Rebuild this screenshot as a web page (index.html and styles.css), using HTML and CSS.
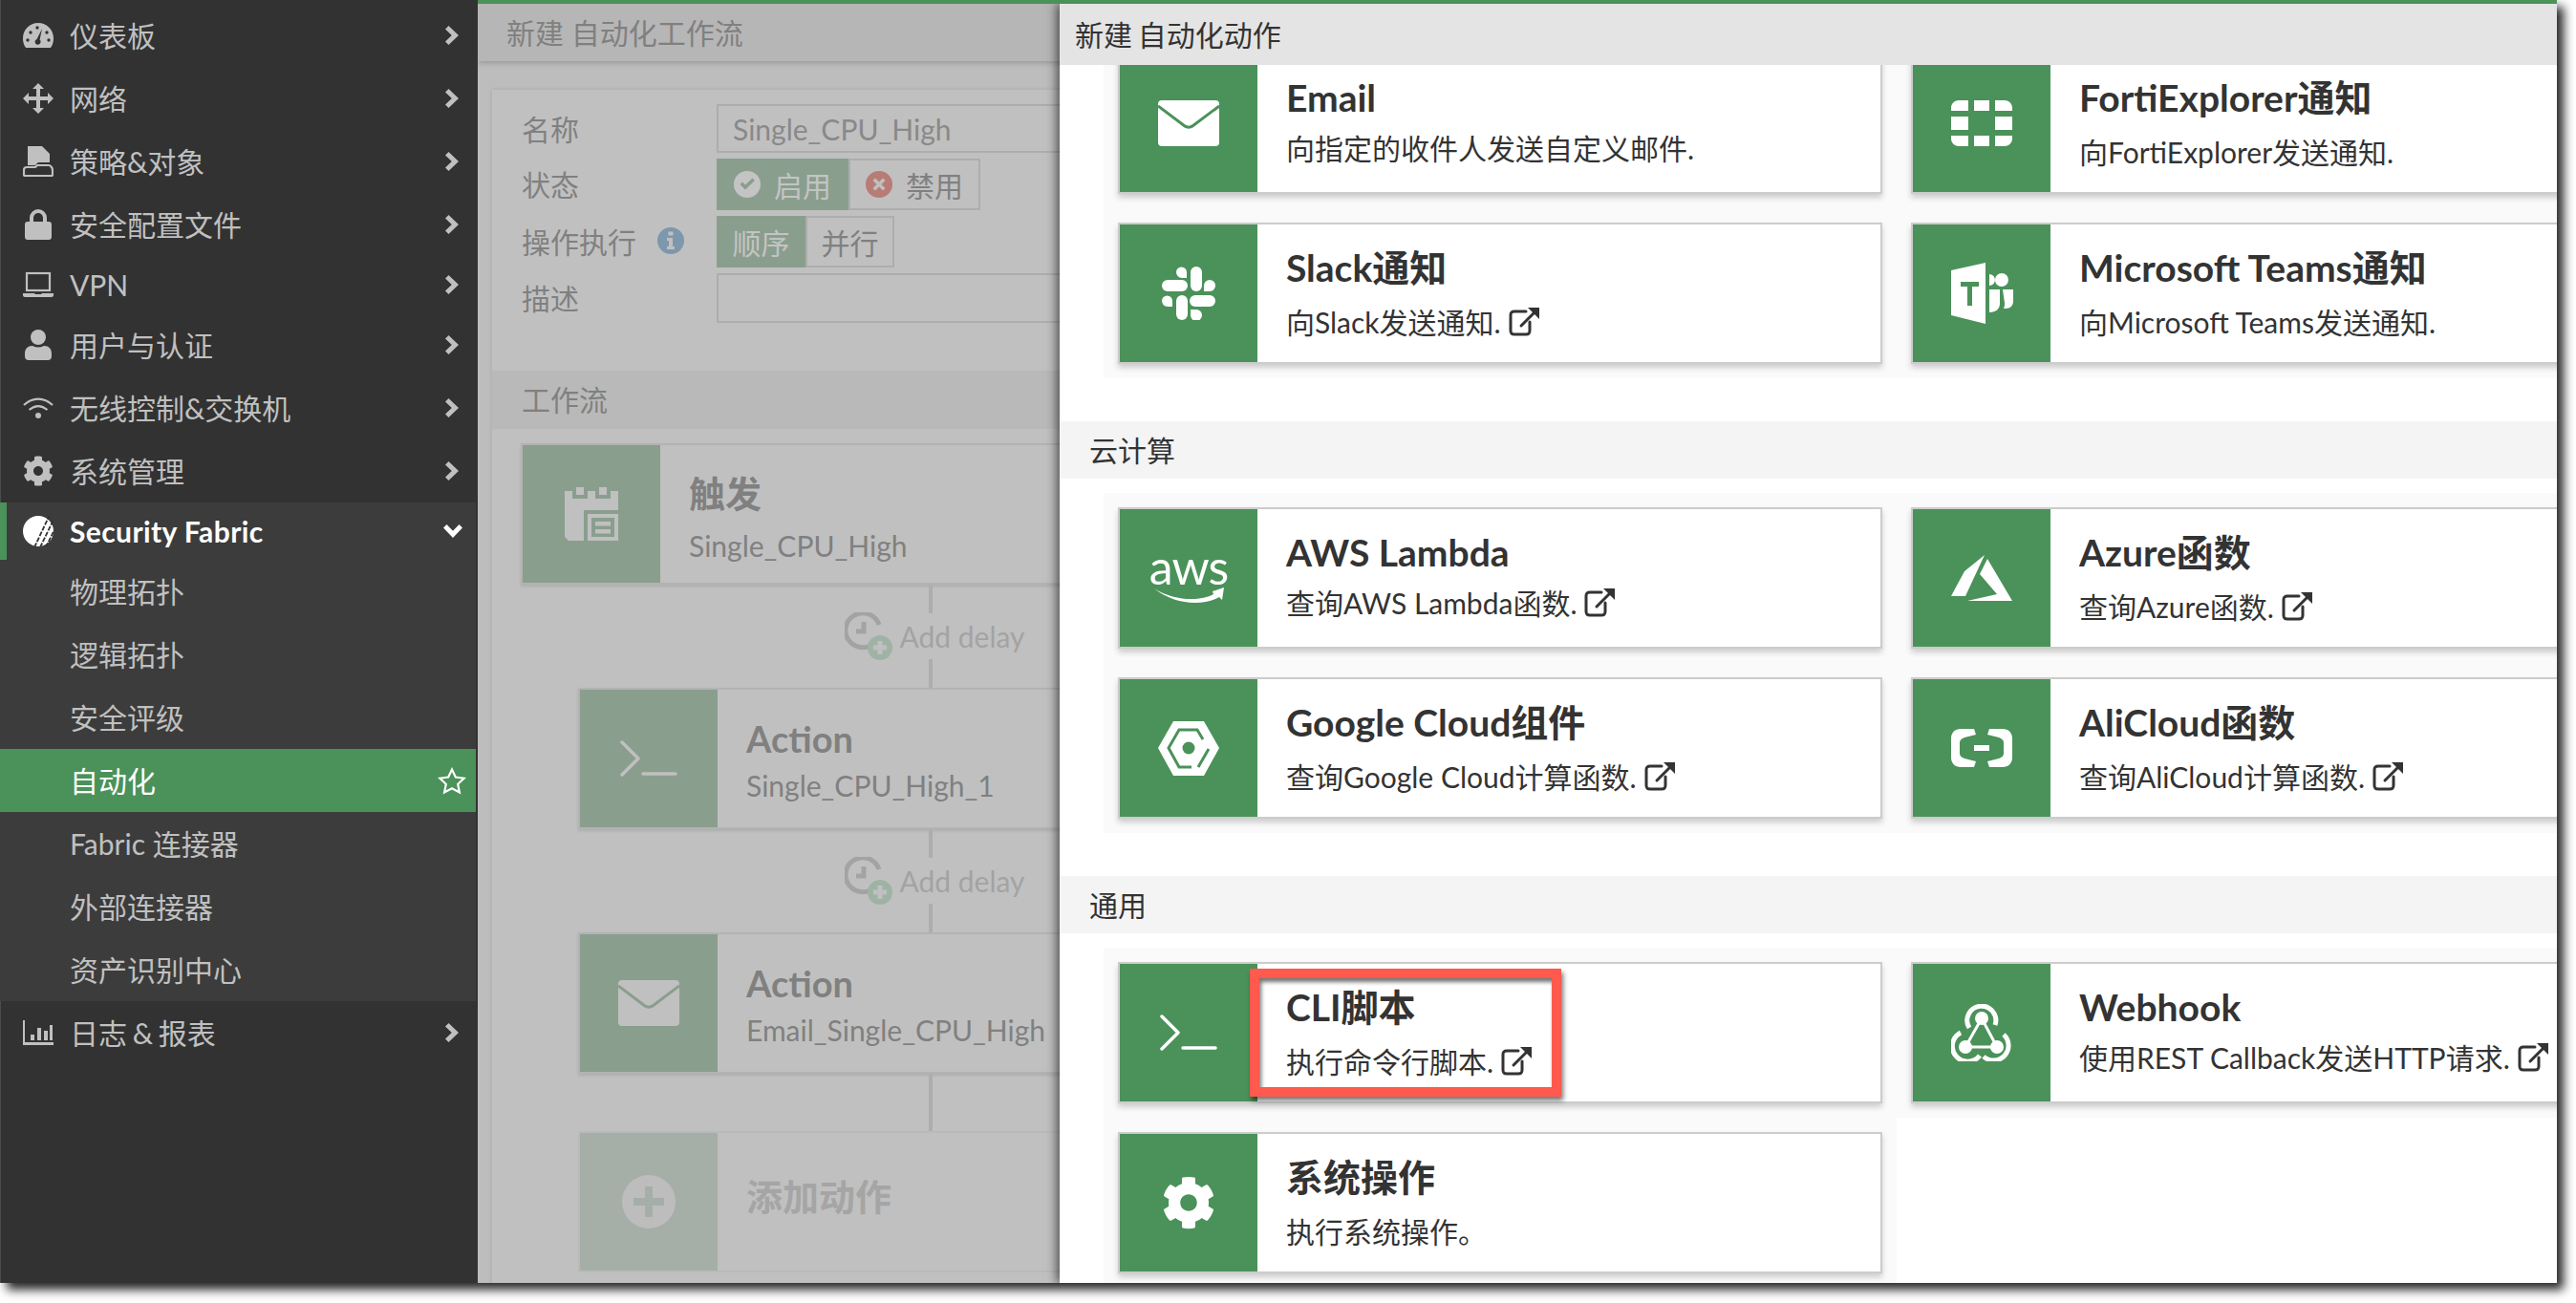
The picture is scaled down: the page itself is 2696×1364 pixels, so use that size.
FILE: index.html
```html
<!DOCTYPE html>
<html lang="zh-CN">
<head>
    <meta charset="UTF-8">
    <title>新建 自动化动作</title>
    <link rel="stylesheet" href="styles.css">
</head>
<body>
    <svg class="sprite" xmlns="http://www.w3.org/2000/svg">
        <symbol id="i-gauge" viewBox="0 0 32 26">
            <path d="M16 0C7 0 0 7 0 16c0 3 .6 6 2 8.5.4.9 1 1.5 2 1.5h24c1 0 1.6-.6 2-1.5 1.4-2.5 2-5.5 2-8.5C32 7 25 0 16 0z"/>
            <g class="cut"><circle cx="5" cy="18" r="1.7"/><circle cx="8" cy="10" r="1.7"/><circle cx="15" cy="5" r="1.7"/><circle cx="27" cy="18" r="1.7"/><circle cx="25" cy="10" r="1.7"/><path d="M20 6l-2.400 11.500a3 3 0 1 1-3-.6z"/></g>
        </symbol>
        <symbol id="i-move" viewBox="0 0 32 32">
            <path d="M16 0l6 6h-4v8h8v-4l6 6-6 6v-4h-8v8h4l-6 6-6-6h4v-8H6v4l-6-6 6-6v4h8V6h-4z"/>
        </symbol>
        <symbol id="i-policy" viewBox="0 0 32 32">
            <path d="M5 0h15l8 8v9H17c-2 0-3 2-4 3H5z"/>
            <path class="line" d="M1 30v-5c0-2 1-3 3-3h9l2-2h12c2 0 4 3 4 5v5c0 1-.5 1-1 1H2c-.5 0-1 0-1-1z"/>
        </symbol>
        <symbol id="i-lock" viewBox="0 0 28 32">
            <path d="M5 13V9a9 9 0 0 1 18 0v4h2c2 0 3 1 3 3v13c0 2-1 3-3 3H3c-2 0-3-1-3-3V16c0-2 1-3 3-3zm4 0h10V9a5 5 0 0 0-10 0z"/>
        </symbol>
        <symbol id="i-laptop" viewBox="0 0 32 26">
            <rect class="line" x="4" y="1" width="24" height="18"/>
            <path d="M0 22h12l1 1h6l1-1h12v2c0 1-1 2-2 2H2c-1 0-2-1-2-2z"/>
        </symbol>
        <symbol id="i-user" viewBox="0 0 28 32">
            <circle cx="14" cy="8" r="8"/>
            <path d="M8 17c4 2 8 2 12 0 5 0 8 3 8 8v3c0 2-1 4-4 4H4c-3 0-4-2-4-4v-3c0-5 3-8 8-8z"/>
        </symbol>
        <symbol id="i-wifi" viewBox="0 0 32 22">
            <path class="line" d="M1 8c9-8.500 21-8.500 30 0M6.500 13c6-5 13-5 19 0"/>
            <circle cx="16" cy="19" r="3"/>
        </symbol>
        <symbol id="i-cog" viewBox="0 0 512 512">
            <path d="M487.4 315.7l-42.6-24.6c4.3-23.2 4.3-47 0-70.2l42.6-24.6c4.900-2.800 7.100-8.600 5.500-14-11.100-35.600-30-67.800-54.700-94.600-3.800-4.100-10-5.100-14.800-2.300L380.800 110c-17.900-15.400-38.500-27.300-60.800-35.100V25.800c0-5.600-3.900-10.500-9.400-11.700-36.700-8.200-74.300-7.800-109.200 0-5.500 1.200-9.400 6.100-9.400 11.700V75c-22.200 7.900-42.800 19.800-60.800 35.100L88.700 85.500c-4.900-2.800-11-1.900-14.800 2.300-24.700 26.700-43.600 58.900-54.700 94.600-1.700 5.400.6 11.200 5.500 14L67.300 221c-4.300 23.200-4.300 47 0 70.200l-42.600 24.600c-4.900 2.800-7.100 8.600-5.500 14 11.100 35.600 30 67.800 54.700 94.600 3.800 4.100 10 5.100 14.800 2.300l42.600-24.600c17.900 15.400 38.500 27.300 60.800 35.100v49.200c0 5.600 3.900 10.500 9.400 11.700 36.700 8.200 74.300 7.800 109.200 0 5.500-1.200 9.400-6.100 9.400-11.700v-49.200c22.200-7.900 42.800-19.800 60.800-35.100l42.600 24.600c4.900 2.800 11 1.900 14.800-2.300 24.700-26.700 43.600-58.900 54.700-94.600 1.500-5.500-.7-11.300-5.600-14.100zM256 336c-44.100 0-80-35.900-80-80s35.900-80 80-80 80 35.900 80 80-35.900 80-80 80z"/>
        </symbol>
        <symbol id="i-fabric" viewBox="0 0 32 32">
            <circle cx="16" cy="16" r="16"/>
            <path class="slash" d="M12 33L28-1M18 33L33 2M24 33L36 8"/>
        </symbol>
        <symbol id="i-chart" viewBox="0 0 32 26">
            <path d="M0 0h2v23h30v3H0zM8 15h4v6H8zM15 8h4v13h-4zM22 11h4v10h-4zM28 5h3v16h-3z"/>
        </symbol>
        <symbol id="i-chev" viewBox="0 0 14 20">
            <path d="M3.500 0L14 10 3.500 20 0 16.500 6.800 10 0 3.500z"/>
        </symbol>
        <symbol id="i-chevd" viewBox="0 0 20 14">
            <path d="M0 3.500L3.500 0 10 6.800 16.500 0 20 3.500 10 14z"/>
        </symbol>
        <symbol id="i-star" viewBox="0 0 30 29">
            <path class="line" d="M15 2.500l3.800 8 8.900 1.200-6.500 6.100 1.700 8.700L15 22.200l-7.900 4.300 1.700-8.700-6.500-6.100 8.900-1.200z"/>
        </symbol>
        <symbol id="i-check" viewBox="0 0 28 28">
            <path fill-rule="evenodd" d="M14 0a14 14 0 1 1 0 28a14 14 0 0 1 0-28zM6.500 14l5.500 5.500L22 10l-2.500-2.500-7.500 7-3-3z"/>
        </symbol>
        <symbol id="i-cross" viewBox="0 0 28 28">
            <path fill-rule="evenodd" d="M14 0a14 14 0 1 1 0 28a14 14 0 0 1 0-28zM10 7.500L7.500 10l4 4-4 4 2.500 2.500 4-4 4 4 2.500-2.500-4-4 4-4L18 7.500l-4 4z"/>
        </symbol>
        <symbol id="i-info" viewBox="0 0 28 28">
            <path fill-rule="evenodd" d="M14 0a14 14 0 1 1 0 28a14 14 0 0 1 0-28zM11.500 4.500v4h5v-4zM10 11v3h2v6h-2v3h8v-3h-2v-9z"/>
        </symbol>
        <symbol id="i-calendar" viewBox="0 0 56 56">
            <path d="M12 0h8v8h-8zM36 0h8v8h-8zM0 4h8v8h16V4h8v8h16V4h8v20H20v32H4l-4-4z"/>
            <path fill-rule="evenodd" d="M24 28h32v28H24zM28 32v20h24V32z"/>
            <path d="M32 36h16v4.500H32zM32 44h16v4.500H32z"/>
        </symbol>
        <symbol id="i-cli" viewBox="0 0 60 38">
            <path class="line-thick" d="M2 2l17 17L2 36M24 35h34"/>
        </symbol>
        <symbol id="i-mail" viewBox="0 0 64 48">
            <rect width="64" height="48" rx="4"/>
            <path class="line-cut" d="M0 6l28 21c2 1.500 6 1.500 8 0L64 6"/>
        </symbol>
        <symbol id="i-plus" viewBox="0 0 56 56">
            <path fill-rule="evenodd" d="M28 0a28 28 0 1 1 0 56a28 28 0 0 1 0-56zM24 12v12H12v8h12v12h8V32h12v-8H32V12z"/>
        </symbol>
        <symbol id="i-delay" viewBox="0 0 50 50">
            <path class="clock" d="M33 30A18 18 0 1 1 36 13M20 10v10h-8"/>
            <circle class="clock-badge" cx="37" cy="37" r="13"/>
            <path class="clock-plus" d="M37 30v14M30 37h14"/>
        </symbol>
        <symbol id="i-slack" viewBox="0 0 56 56">
            <rect x="30" width="12" height="26" rx="6"/><path d="M15 6a5.500 5.500 0 0 1 11 0v6H21a6 6 0 0 1-6-6z"/>
            <rect y="14" width="27" height="12" rx="6"/><path d="M44 20a6 6 0 0 1 12 0 6 6 0 0 1-6 6h-6z"/>
            <rect x="29" y="30" width="27" height="12" rx="6"/><path d="M0 36a5.500 5.500 0 0 1 11 0v6H6a6 6 0 0 1-6-6z"/>
            <rect x="15" y="30" width="12" height="26" rx="6"/><path d="M30 45h6a6 6 0 1 1-6 6z"/>
        </symbol>
        <symbol id="i-forti" viewBox="0 0 64 48">
            <path d="M18 0v11H0V8c0-4 3-8 8-8zM24 0h16v11H24zM46 0h10c5 0 8 4 8 8v3H46zM0 17h18v14H0zM46 17h18v14H46zM0 37h18v11H8c-5 0-8-4-8-8zM24 37h16v11H24zM46 37h18v3c0 4-3 8-8 8H46z"/>
        </symbol>
        <symbol id="i-teams" viewBox="0 0 65 64">
            <path fill-rule="evenodd" d="M0 8L36 0v64L0 55zM10 20v5h7v20h5V25h7v-5z"/>
            <path d="M40 19v3a9 9 0 0 1 0 0zM40 12a6 6 0 1 1 0 12zM53 11a7 7 0 1 1-.1 14 7 7 0 0 1 .1-14zM40 28h11v15c0 5-4 9-11 9zM54 28h11v12c0 5-3 8-8 8h-2c1-2 1-4 1-6z"/>
        </symbol>
        <symbol id="i-azure" viewBox="0 0 64 48">
            <path d="M35 0L14 17 0 43h15zM38 4L64 48H17l31-7-18-21z"/>
        </symbol>
        <symbol id="i-ali" viewBox="0 0 64 40">
            <path d="M24 0H10C4 0 0 4 0 10v20c0 6 4 10 10 10h14l2-6-12-3c-3-1-5-3-5-5V14c0-2 2-4 5-5l12-3zM40 0h14c6 0 10 4 10 10v20c0 6-4 10-10 10H40l-2-6 12-3c3-1 5-3 5-5V14c0-2-2-4-5-5L38 6zM24 17h16v6H24z"/>
        </symbol>
        <symbol id="i-google" viewBox="0 0 64 57">
            <path d="M16 0h32l16 28-16 29H16L0 28z"/>
            <path class="line-cut" d="M47 19L41 9H22L11 28l11 20h13M53 29L42 48"/>
            <circle class="fill-cut" cx="32" cy="28" r="6.500"/>
        </symbol>
        <symbol id="i-hook" viewBox="0 0 64 60">
            <path class="line-hook" d="M19 25A15 15 0 1 1 46 22M10 30A16 16 0 1 0 30 54M34 55A15.500 15.500 0 1 0 55 32"/>
            <path class="line-thin" d="M32 15L15 45h33z"/>
            <circle cx="32" cy="15" r="7"/><circle cx="15" cy="45" r="7"/><circle cx="48" cy="45" r="7"/>
        </symbol>
        <symbol id="i-ext" viewBox="0 0 32 30">
            <path class="line-ext" d="M18 4H6C3 4 2 5 2 8v16c0 3 1 4 4 4h12c3 0 4-1 4-4V15"/>
            <path class="line-ext" d="M13 19L28 4"/>
            <path d="M20 0h12v12z"/>
        </symbol>
    </svg>

    <div class="window">
        <nav class="sidebar">
            <a class="nav-row"><svg class="nav-icon"><use href="#i-gauge"/></svg><span class="nav-label">仪表板</span><svg class="chev"><use href="#i-chev"/></svg></a>
            <a class="nav-row"><svg class="nav-icon"><use href="#i-move"/></svg><span class="nav-label">网络</span><svg class="chev"><use href="#i-chev"/></svg></a>
            <a class="nav-row"><svg class="nav-icon"><use href="#i-policy"/></svg><span class="nav-label">策略&amp;对象</span><svg class="chev"><use href="#i-chev"/></svg></a>
            <a class="nav-row"><svg class="nav-icon"><use href="#i-lock"/></svg><span class="nav-label">安全配置文件</span><svg class="chev"><use href="#i-chev"/></svg></a>
            <a class="nav-row nav-latin"><svg class="nav-icon"><use href="#i-laptop"/></svg><span class="nav-label">VPN</span><svg class="chev"><use href="#i-chev"/></svg></a>
            <a class="nav-row"><svg class="nav-icon"><use href="#i-user"/></svg><span class="nav-label">用户与认证</span><svg class="chev"><use href="#i-chev"/></svg></a>
            <a class="nav-row"><svg class="nav-icon"><use href="#i-wifi"/></svg><span class="nav-label">无线控制&amp;交换机</span><svg class="chev"><use href="#i-chev"/></svg></a>
            <a class="nav-row"><svg class="nav-icon"><use href="#i-cog"/></svg><span class="nav-label">系统管理</span><svg class="chev"><use href="#i-chev"/></svg></a>
            <div class="nav-group">
                <a class="nav-row nav-open"><svg class="nav-icon"><use href="#i-fabric"/></svg><span class="nav-label">Security Fabric</span><svg class="chevd"><use href="#i-chevd"/></svg></a>
                <a class="nav-sub">物理拓扑</a>
                <a class="nav-sub">逻辑拓扑</a>
                <a class="nav-sub">安全评级</a>
                <a class="nav-sub nav-active">自动化<svg class="star"><use href="#i-star"/></svg></a>
                <a class="nav-sub">Fabric 连接器</a>
                <a class="nav-sub">外部连接器</a>
                <a class="nav-sub">资产识别中心</a>
            </div>
            <a class="nav-row nav-last"><svg class="nav-icon"><use href="#i-chart"/></svg><span class="nav-label">日志 &amp; 报表</span><svg class="chev"><use href="#i-chev"/></svg></a>
        </nav>

        <main class="main">
            <div class="main-head">新建 自动化工作流</div>
            <section class="form-card">
                <div class="form">
                    <div class="form-row">
                        <label class="form-label">名称</label>
                        <div class="input">Single_CPU_High</div>
                    </div>
                    <div class="form-row">
                        <label class="form-label">状态</label>
                        <div class="toggle">
                            <span class="toggle-on toggle-wide"><svg class="toggle-icon"><use href="#i-check"/></svg>启用</span>
                            <span class="toggle-off toggle-wide"><svg class="toggle-icon icon-red"><use href="#i-cross"/></svg>禁用</span>
                        </div>
                    </div>
                    <div class="form-row">
                        <label class="form-label">操作执行<svg class="info-icon"><use href="#i-info"/></svg></label>
                        <div class="toggle">
                            <span class="toggle-on">顺序</span>
                            <span class="toggle-off">并行</span>
                        </div>
                    </div>
                    <div class="form-row">
                        <label class="form-label">描述</label>
                        <div class="input input-short"></div>
                    </div>
                </div>

                <div class="flow-head">工作流</div>
                <div class="flow">
                    <div class="flow-card flow-trigger">
                        <div class="flow-icon"><svg class="ic-calendar"><use href="#i-calendar"/></svg></div>
                        <div class="flow-text">
                            <div class="flow-title">触发</div>
                            <div class="flow-desc">Single_CPU_High</div>
                        </div>
                    </div>
                    <div class="flow-line"></div>
                    <div class="add-delay"><svg class="delay-icon"><use href="#i-delay"/></svg>Add delay</div>
                    <div class="flow-line"></div>
                    <div class="flow-card">
                        <div class="flow-icon"><svg class="ic-cli"><use href="#i-cli"/></svg></div>
                        <div class="flow-text">
                            <div class="flow-title">Action</div>
                            <div class="flow-desc">Single_CPU_High_1</div>
                        </div>
                    </div>
                    <div class="flow-line"></div>
                    <div class="add-delay"><svg class="delay-icon"><use href="#i-delay"/></svg>Add delay</div>
                    <div class="flow-line"></div>
                    <div class="flow-card">
                        <div class="flow-icon"><svg class="ic-mail"><use href="#i-mail"/></svg></div>
                        <div class="flow-text">
                            <div class="flow-title">Action</div>
                            <div class="flow-desc">Email_Single_CPU_High</div>
                        </div>
                    </div>
                    <div class="flow-line flow-line-long"></div>
                    <div class="flow-card flow-add">
                        <div class="flow-icon"><svg class="ic-plus"><use href="#i-plus"/></svg></div>
                        <div class="flow-text"><div class="flow-title">添加动作</div></div>
                    </div>
                </div>
            </section>

            <aside class="panel">
                <div class="panel-head">新建 自动化动作</div>
                <div class="panel-body">
                    <div class="tiles tiles-first">
                        <div class="tile">
                            <div class="card">
                                <div class="card-icon"><svg class="ic-mail"><use href="#i-mail"/></svg></div>
                                <div class="card-text">
                                    <div class="card-title">Email</div>
                                    <div class="card-desc tight">向指定的收件人发送自定义邮件.</div>
                                </div>
                            </div>
                        </div>
                        <div class="tile">
                            <div class="card">
                                <div class="card-icon"><svg class="ic-forti"><use href="#i-forti"/></svg></div>
                                <div class="card-text">
                                    <div class="card-title">FortiExplorer通知</div>
                                    <div class="card-desc">向FortiExplorer发送通知.</div>
                                </div>
                            </div>
                        </div>
                        <div class="tile">
                            <div class="card">
                                <div class="card-icon"><svg class="ic-slack"><use href="#i-slack"/></svg></div>
                                <div class="card-text">
                                    <div class="card-title">Slack通知</div>
                                    <div class="card-desc">向Slack发送通知.<svg class="ext"><use href="#i-ext"/></svg></div>
                                </div>
                            </div>
                        </div>
                        <div class="tile">
                            <div class="card">
                                <div class="card-icon"><svg class="ic-teams"><use href="#i-teams"/></svg></div>
                                <div class="card-text">
                                    <div class="card-title">Microsoft Teams通知</div>
                                    <div class="card-desc">向Microsoft Teams发送通知.</div>
                                </div>
                            </div>
                        </div>
                    </div>

                    <div class="section-head">云计算</div>
                    <div class="tiles">
                        <div class="tile">
                            <div class="card">
                                <div class="card-icon"><span class="aws"><span class="aws-word">aws</span><svg class="aws-smile" viewBox="0 0 74 18"><path d="M1 2c20 13 48 14 62 6l-1-3 12-4-2 13-3-3c-16 9-46 9-68-9z"/></svg></span></div>
                                <div class="card-text">
                                    <div class="card-title">AWS Lambda</div>
                                    <div class="card-desc tight">查询AWS Lambda函数.<svg class="ext"><use href="#i-ext"/></svg></div>
                                </div>
                            </div>
                        </div>
                        <div class="tile">
                            <div class="card">
                                <div class="card-icon"><svg class="ic-azure"><use href="#i-azure"/></svg></div>
                                <div class="card-text">
                                    <div class="card-title">Azure函数</div>
                                    <div class="card-desc">查询Azure函数.<svg class="ext"><use href="#i-ext"/></svg></div>
                                </div>
                            </div>
                        </div>
                        <div class="tile">
                            <div class="card">
                                <div class="card-icon"><svg class="ic-google"><use href="#i-google"/></svg></div>
                                <div class="card-text">
                                    <div class="card-title">Google Cloud组件</div>
                                    <div class="card-desc">查询Google Cloud计算函数.<svg class="ext"><use href="#i-ext"/></svg></div>
                                </div>
                            </div>
                        </div>
                        <div class="tile">
                            <div class="card">
                                <div class="card-icon"><svg class="ic-ali"><use href="#i-ali"/></svg></div>
                                <div class="card-text">
                                    <div class="card-title">AliCloud函数</div>
                                    <div class="card-desc">查询AliCloud计算函数.<svg class="ext"><use href="#i-ext"/></svg></div>
                                </div>
                            </div>
                        </div>
                    </div>

                    <div class="section-head">通用</div>
                    <div class="tiles">
                        <div class="tile">
                            <div class="card">
                                <div class="card-icon"><svg class="ic-cli"><use href="#i-cli"/></svg></div>
                                <div class="card-text">
                                    <div class="card-title">CLI脚本</div>
                                    <div class="card-desc">执行命令行脚本.<svg class="ext"><use href="#i-ext"/></svg></div>
                                </div>
                                <div class="highlight"></div>
                            </div>
                        </div>
                        <div class="tile">
                            <div class="card">
                                <div class="card-icon"><svg class="ic-hook"><use href="#i-hook"/></svg></div>
                                <div class="card-text">
                                    <div class="card-title">Webhook</div>
                                    <div class="card-desc tight">使用REST Callback发送HTTP请求.<svg class="ext"><use href="#i-ext"/></svg></div>
                                </div>
                            </div>
                        </div>
                        <div class="tile">
                            <div class="card">
                                <div class="card-icon"><svg class="ic-cog"><use href="#i-cog"/></svg></div>
                                <div class="card-text">
                                    <div class="card-title">系统操作</div>
                                    <div class="card-desc">执行系统操作。</div>
                                </div>
                            </div>
                        </div>
                    </div>
                </div>
            </aside>
        </main>
    </div>
</body>
</html>
```

FILE: styles.css
```css
* {
    box-sizing: border-box;
}

html, body {
    margin: 0;
    height: 100%;
    background-color: #fff;
    overflow: hidden;
}

body {
    font-family: Lato, "Noto Sans CJK SC", sans-serif;
    font-size: 30px;
    color: #333;
}

.sprite {
    position: absolute;
    width: 0;
    height: 0;
}

/* svg sprite helpers */
.cut { fill: #323232; }
.line { fill: none; stroke: currentColor; stroke-width: 2.2; }
.slash { fill: none; stroke: #323232; stroke-width: 1.8; stroke-dasharray: 5 1.5; }
.line-thick { fill: none; stroke: currentColor; stroke-width: 3.500; stroke-linecap: round; stroke-linejoin: round; }
.line-cut { fill: none; stroke: var(--cut, #4a9259); stroke-width: 3; }
.fill-cut { fill: var(--cut, #4a9259); }
.line-hook { fill: none; stroke: currentColor; stroke-width: 5; }
.line-thin { fill: none; stroke: currentColor; stroke-width: 3; }
.line-ext { fill: none; stroke: currentColor; stroke-width: 3; stroke-linecap: round; }
.clock { fill: none; stroke: #a3a3a3; stroke-width: 5; }
.clock-badge { fill: #9fb3a5; }
.clock-plus { fill: none; stroke: #c0c0c0; stroke-width: 5; }

.window {
    display: flex;
    width: 2676px;
    height: 1343px;
    box-shadow: 7px 7px 10px rgba(0, 0, 0, 0.85);
}

/* sidebar */
.sidebar {
    flex: 0 0 500px;
    background-color: #323232;
    border-left: 1px solid #4c4c4c;
    padding-top: 4px;
    color: #c0c0c0;
}

.nav-row {
    display: flex;
    align-items: center;
    height: 66px;
    padding: 0 20px 0 23px;
}

.nav-latin {
    height: 60px;
}

.nav-icon {
    flex: 0 0 32px;
    height: 32px;
    fill: currentColor;
    margin-right: 17px;
}

.nav-label {
    flex: 1;
    margin-top: -2px;
    white-space: nowrap;
}

.nav-latin .nav-label {
    margin-top: 0;
}

.chev {
    width: 14px;
    height: 20px;
    fill: currentColor;
}

.nav-group {
    background-color: #3c3c3c;
    margin-right: 2px;
    margin-left: -1px;
}

.nav-open {
    height: 60px;
    border-left: 7px solid #4a9259;
    padding-left: 17px;
    padding-right: 14px;
    color: #fff;
    font-weight: 700;
}

.nav-open .nav-label {
    margin-top: 0;
    letter-spacing: 0.4px;
}

.chevd {
    width: 20px;
    height: 14px;
    fill: currentColor;
}

.nav-sub {
    display: flex;
    align-items: center;
    justify-content: space-between;
    height: 66px;
    padding: 0 10px 3px 73px;
}

.nav-active {
    background-color: #4a9259;
    color: #fff;
}

.star {
    width: 30px;
    height: 29px;
    margin-top: 3px;
    color: #fff;
}

.nav-last .nav-label {
    word-spacing: -2px;
}

/* dimmed page behind the panel */
.main {
    position: relative;
    flex: 1;
    min-width: 0;
    border-top: 4px solid #4a9259;
    background-color: #bdbdbd;
    color: #808080;
    overflow: hidden;
}

.main-head {
    height: 60px;
    line-height: 60px;
    padding-left: 30px;
    background-color: #b6b6b6;
    box-shadow: 0 2px 6px rgba(0, 0, 0, 0.2);
}

.form-card {
    margin: 30px 0 0 15px;
    width: 1200px;
    height: 1300px;
    background-color: #c0c0c0;
    box-shadow: 0 0 4px rgba(0, 0, 0, 0.12);
}

.form {
    display: flex;
    flex-direction: column;
    gap: 6px;
    padding: 15px 0 0 31px;
}

.form-row {
    display: flex;
    align-items: center;
}

.form-label {
    display: flex;
    align-items: center;
    flex: 0 0 204px;
    margin-top: -2px;
}

.info-icon {
    width: 28px;
    height: 28px;
    margin-left: 22px;
    fill: #7d97ad;
}

.input {
    flex: 1;
    height: 51px;
    line-height: 49px;
    padding-left: 15px;
    border: 2px solid #adadad;
    color: #898989;
}

.input-short {
    height: 52px;
}

.toggle {
    display: flex;
    height: 54px;
}

.toggle-on, .toggle-off {
    display: flex;
    align-items: center;
    justify-content: center;
    gap: 14px;
    width: 93px;
}

.toggle-wide {
    width: 138px;
}

.toggle-on {
    background-color: #8a9e8e;
    color: #c4c4c4;
}

.toggle-off {
    border: 2px solid #adadad;
}

.toggle-icon {
    width: 28px;
    height: 28px;
    fill: #c4c4c4;
}

.icon-red {
    fill: #b87c76;
}

.flow-head {
    height: 61px;
    line-height: 61px;
    margin-top: 50px;
    padding-left: 31px;
    background-color: #b9b9b9;
}

.flow {
    display: flex;
    flex-direction: column;
    align-items: center;
    width: 858px;
    margin: 15px 0 0 30px;
}

.flow-card {
    display: flex;
    flex: none;
    width: 738px;
    height: 148px;
    border: 2px solid #b3b3b3;
    box-shadow: 0 2px 3px rgba(0, 0, 0, 0.1);
}

.flow-trigger {
    width: 858px;
}

.flow-icon {
    display: flex;
    align-items: center;
    justify-content: center;
    flex: 0 0 144px;
    background-color: #8a9e8e;
    color: #c0c0c0;
    --cut: #8a9e8e;
}

.flow-text {
    padding-left: 30px;
}

.flow-title {
    margin-top: 29px;
    font-size: 38px;
    line-height: 44px;
    font-weight: 700;
}

.flow-desc {
    margin-top: 7px;
    line-height: 40px;
}

.flow-trigger .flow-title {
    margin-top: 28px;
}

.flow-trigger .flow-desc {
    margin-top: 13px;
}

.flow-line {
    flex: none;
    width: 4px;
    height: 30px;
    background-color: #adadad;
}

.flow-line-long {
    height: 60px;
}

.add-delay {
    display: flex;
    align-items: center;
    gap: 8px;
    height: 48px;
    margin-left: 8px;
    color: #a3a3a3;
}

.delay-icon {
    width: 50px;
    height: 50px;
}

.flow-add {
    border-color: #bababa;
    box-shadow: none;
}

.flow-add .flow-icon {
    background-color: #a5afa8;
    color: #bdbdbd;
}

.flow-add .flow-title {
    margin-top: 44px;
    color: #a5a5a5;
}

.ic-calendar { width: 56px; height: 56px; fill: currentColor; }
.ic-cli { width: 60px; height: 38px; color: inherit; }
.ic-mail { width: 64px; height: 48px; fill: currentColor; }
.ic-plus { width: 56px; height: 56px; fill: currentColor; }
.ic-slack { width: 56px; height: 56px; fill: currentColor; }
.ic-forti { width: 64px; height: 48px; fill: currentColor; }
.ic-teams { width: 65px; height: 64px; fill: currentColor; }
.ic-azure { width: 64px; height: 48px; fill: currentColor; }
.ic-ali { width: 64px; height: 40px; fill: currentColor; }
.ic-google { width: 64px; height: 57px; fill: currentColor; }
.ic-hook { width: 64px; height: 60px; fill: currentColor; }
.ic-cog { width: 56px; height: 56px; fill: currentColor; }

/* slide-in panel */
.panel {
    position: absolute;
    top: 0;
    left: 609px;
    right: 0;
    bottom: 0;
    display: flex;
    flex-direction: column;
    background-color: #fff;
    color: #333;
    box-shadow: -3px 0 10px rgba(0, 0, 0, 0.6);
}

.panel-head {
    flex: none;
    height: 64px;
    line-height: 64px;
    padding-left: 16px;
    word-spacing: -2px;
    background-color: #e4e4e4;
    position: relative;
    z-index: 1;
}

.panel-body {
    flex: 1;
    overflow: hidden;
}

.tiles {
    display: grid;
    grid-template-columns: 830px 830px;
    grid-auto-rows: 178px;
    margin: 15px 0 0 46px;
}

.tiles-first {
    margin-top: -28px;
}

.tile {
    padding: 15px;
    background-color: #fafafa;
}

.card {
    position: relative;
    display: flex;
    height: 148px;
    background-color: #fff;
    border: 2px solid #ccc;
    box-shadow: 0 4px 6px rgba(0, 0, 0, 0.18);
}

.card-icon {
    display: flex;
    align-items: center;
    justify-content: center;
    flex: 0 0 144px;
    background-color: #4a9259;
    color: #fff;
    --cut: #4a9259;
}

.card-text {
    padding-left: 30px;
    white-space: nowrap;
}

.card-title {
    margin-top: 23px;
    font-size: 39px;
    line-height: 44px;
    font-weight: 700;
}

.card-desc {
    margin-top: 15px;
    line-height: 40px;
}

.tight {
    margin-top: 11px;
}

.ext {
    width: 32px;
    height: 30px;
    margin-left: 8px;
    vertical-align: -3px;
    fill: currentColor;
}

.section-head {
    height: 60px;
    line-height: 60px;
    margin-top: 45px;
    padding-left: 31px;
    background-color: #f4f4f4;
}

.aws {
    display: flex;
    flex-direction: column;
    align-items: center;
    width: 74px;
    margin-top: -4px;
}

.aws-word {
    font-size: 50px;
    line-height: 38px;
    letter-spacing: -1px;
}

.aws-smile {
    width: 74px;
    height: 18px;
    margin-top: 2px;
    fill: currentColor;
}

.highlight {
    position: absolute;
    left: 136px;
    top: 5px;
    width: 326px;
    height: 134px;
    border: 10px solid #ff5a4d;
    box-shadow: 2px 4px 5px rgba(0, 0, 0, 0.55), inset 2px 4px 4px rgba(0, 0, 0, 0.55);
}
```
